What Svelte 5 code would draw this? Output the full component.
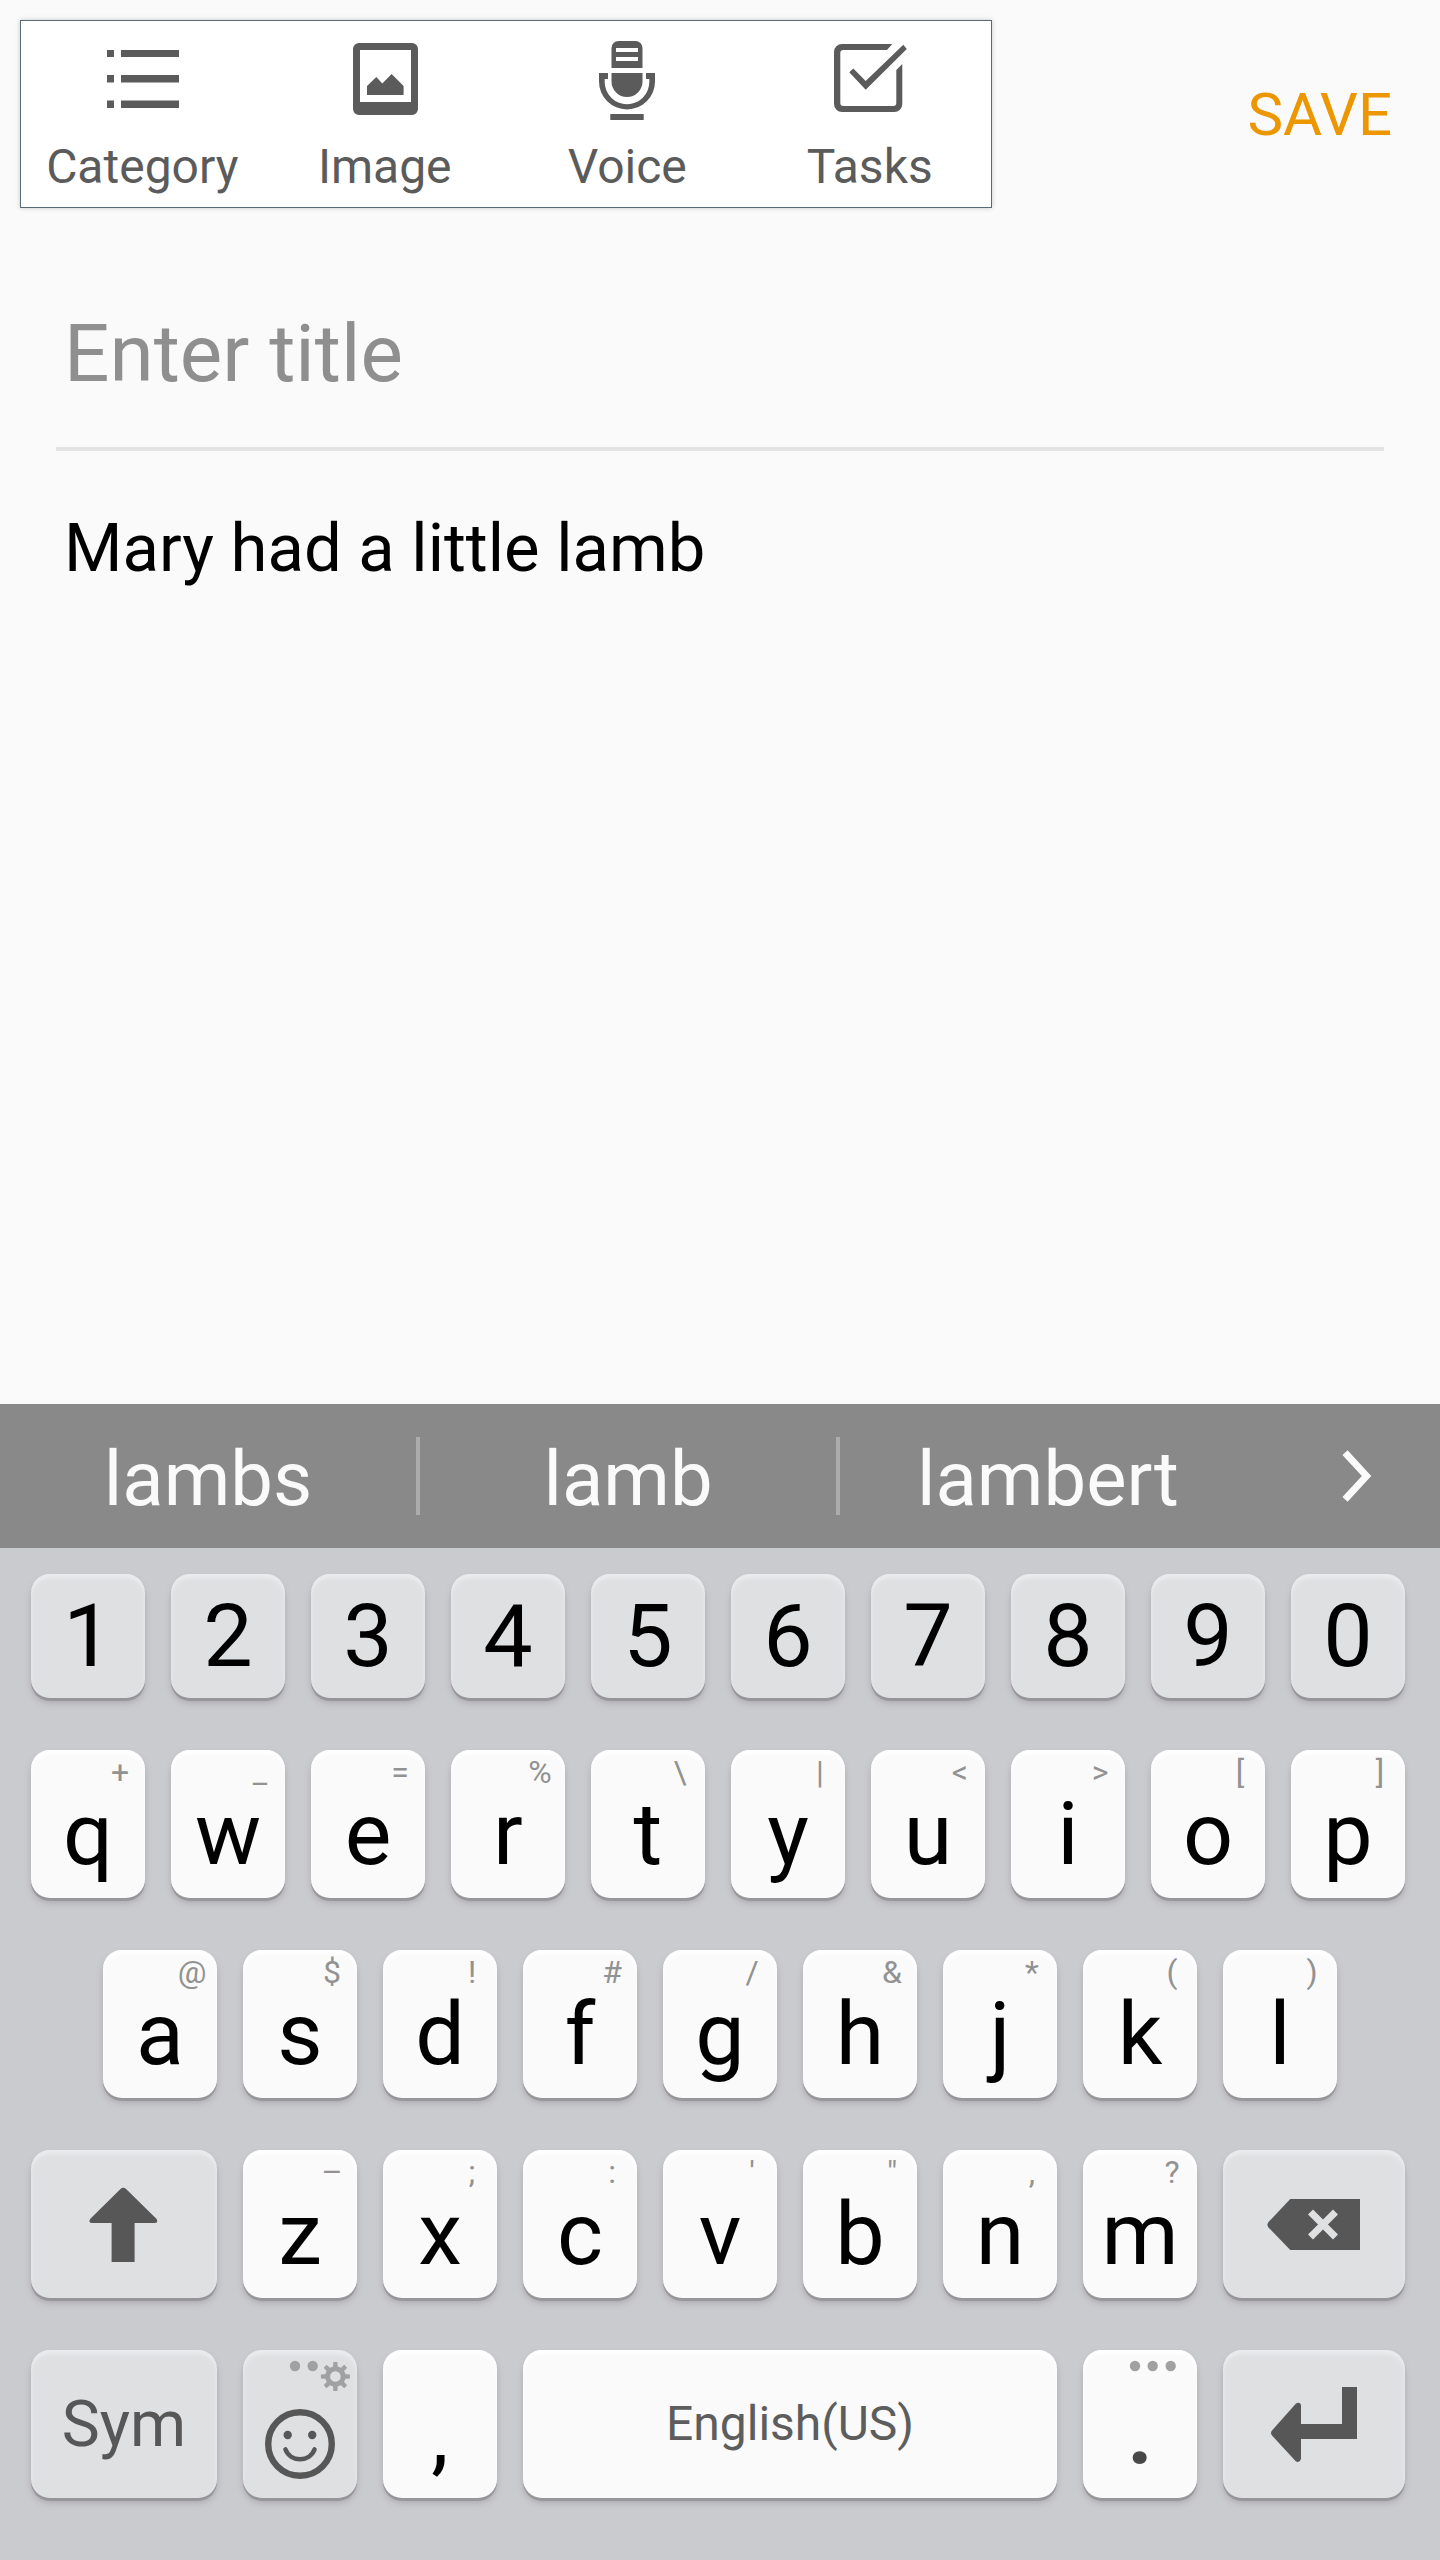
<script>
  const digits = ['1', '2', '3', '4', '5', '6', '7', '8', '9', '0'];
  const rowQ = [['q', '+'], ['w', '_'], ['e', '='], ['r', '%'], ['t', '\\'], ['y', '|'], ['u', '<'], ['i', '>'], ['o', '['], ['p', ']']];
  const rowA = [['a', '@'], ['s', '$'], ['d', '!'], ['f', '#'], ['g', '/'], ['h', '&'], ['j', '*'], ['k', '('], ['l', ')']];
  const rowZ = [['z', '–'], ['x', ';'], ['c', ':'], ['v', "'"], ['b', '"'], ['n', ','], ['m', '?']];
  const suggestions = ['lambs', 'lamb', 'lambert'];

  let title = $state('');
  let note = $state('Mary had a little lamb');

  const type = (ch) => (note += ch);
  const erase = () => (note = note.slice(0, -1));
  const replaceLast = (word) => (note = note.replace(/\S*$/, word));

  // Gear outline built from eight evenly spaced teeth.
  const teeth = [0, 45, 90, 135, 180, 225, 270, 315];
</script>

{#snippet letter(key)}
  <button class="key light" onclick={() => type(key[0])}>
    <span class="hint">{key[1]}</span>
    <span class="glyph">{key[0]}</span>
  </button>
{/snippet}

<div class="screen">
  <header>
    <nav class="tools" aria-label="Insert">
      <button class="tool">
        <svg viewBox="0 0 80 80" aria-hidden="true">
          <path d="M5 10h7v7h-7zM19 10h58v7h-58zM5 35h7v7.500h-7zM19 35h58v7.500h-58zM5 60.500h7v7.500h-7zM19 60.500h58v7.500h-58z" />
        </svg>
        <span>Category</span>
      </button>
      <button class="tool">
        <svg viewBox="0 0 80 80" aria-hidden="true">
          <path fill-rule="evenodd" d="M14 3h53a6 6 0 0 1 6 6v60a6 6 0 0 1-6 6h-53a6 6 0 0 1-6-6v-60a6 6 0 0 1 6-6zM15 10v52h51v-52z" />
          <path d="M22 55v-9l9.300-9 6 6.500 9.300-9.500 12 12v9z" />
        </svg>
        <span>Image</span>
      </button>
      <button class="tool">
        <svg viewBox="0 0 80 80" aria-hidden="true">
          <path fill-rule="evenodd" d="M31.500 1h17a7 7 0 0 1 7 7v20h-31v-20a7 7 0 0 1 7-7zM29 8v4h22v-4zM29 17v4h22v-4z" />
          <path d="M24.500 33h31v8.500a15.500 15.500 0 0 1-31 0z" />
          <path d="M12 33h9v6h-3.300v3a22.300 22.300 0 0 0 44.600 0v-3h-3.300v-6h9v8.500a28 28 0 0 1-56 0z" />
          <path d="M23.300 74h33.400v6h-33.400z" />
        </svg>
        <span>Voice</span>
      </button>
      <button class="tool">
        <svg viewBox="0 0 80 80" aria-hidden="true">
          <path d="M62.300 4h-50.300a8 8 0 0 0-8 8v52a8 8 0 0 0 8 8h52.300a8 8 0 0 0 8-8v-40l-6 6v33a3 3 0 0 1-3 3h-50a3 3 0 0 1-3-3v-50a3 3 0 0 1 3-3h43.700z" />
          <path d="M19.300 32.300l4-3.800 12.400 12.500 37.600-36.300 3.500 4.200-41.100 40.800z" />
        </svg>
        <span>Tasks</span>
      </button>
    </nav>
    <button class="save">SAVE</button>
  </header>

  <main>
    <input class="title" aria-label="Title" placeholder="Enter title" bind:value={title} />
    <textarea class="note" aria-label="Note" spellcheck="false" bind:value={note}></textarea>
  </main>

  <section class="suggestions" aria-label="Suggestions">
    {#each suggestions as word}
      <button class="word" onclick={() => replaceLast(word)}>{word}</button>
    {/each}
    <button class="more" aria-label="More suggestions">
      <svg viewBox="0 0 36 60" aria-hidden="true"><path d="M6 6.700L27.500 30 6 53.300" /></svg>
    </button>
  </section>

  <section class="keyboard" aria-label="Keyboard">
    <div class="row numbers">
      {#each digits as d}
        <button class="key dark" onclick={() => type(d)}><span class="glyph">{d}</span></button>
      {/each}
    </div>
    <div class="row">
      {#each rowQ as key}{@render letter(key)}{/each}
    </div>
    <div class="row inset">
      {#each rowA as key}{@render letter(key)}{/each}
    </div>
    <div class="row">
      <button class="key dark wide" aria-label="Shift">
        <svg class="icon" viewBox="0 0 100 100" aria-hidden="true">
          <path d="M46.500 15q2.800-2.500 5.600 0l30.500 30q2 4-2 4h-20v39h-23v-39h-19.500q-4 0-2-4z" />
        </svg>
      </button>
      {#each rowZ as key}{@render letter(key)}{/each}
      <button class="key dark side" aria-label="Backspace" onclick={erase}>
        <svg class="icon" viewBox="0 0 100 100" aria-hidden="true">
          <path d="M26.300 25h69.700v51h-69.700l-21.800-22.500q-2.200-2.700 0-5.500z" />
          <path class="cross" d="M46.500 38l25 25M71.500 38l-25 25" />
        </svg>
      </button>
    </div>
    <div class="row">
      <button class="key dark wide sym">Sym</button>
      <button class="key dark" aria-label="Emoji and settings">
        <svg class="full" viewBox="0 0 114 148" aria-hidden="true">
          <g class="faint">
            <circle cx="52" cy="16" r="5.200" />
            <circle cx="69.700" cy="16" r="5.200" />
            <circle class="ring" cx="92.400" cy="26.500" r="7.800" />
            {#each teeth as angle}
              <path d="M89.900 19l.5-7h4l.5 7z" transform="rotate({angle} 92.400 26.500)" />
            {/each}
          </g>
          <circle class="line" cx="57" cy="94" r="31.800" />
          <circle cx="44.700" cy="85" r="4.200" />
          <circle cx="69.200" cy="85" r="4.200" />
          <path class="smile" d="M42.500 99.500c5 13 24 13 29 0" />
        </svg>
      </button>
      <button class="key light" onclick={() => type(',')}><span class="glyph">,</span></button>
      <button class="key light space" onclick={() => type(' ')}>English(US)</button>
      <button class="key light" onclick={() => type('.')}>
        <svg class="full" viewBox="0 0 114 148" aria-hidden="true">
          <g class="faint">
            <circle cx="52" cy="16" r="5.200" />
            <circle cx="69.700" cy="16" r="5.200" />
            <circle cx="87.700" cy="16" r="5.200" />
          </g>
        </svg>
        <span class="glyph soft">.</span>
      </button>
      <button class="key dark side" aria-label="Enter" onclick={() => type('\n')}>
        <svg class="icon" viewBox="0 0 100 100" aria-hidden="true">
          <path d="M78 13h15v52h-56v20q-1 4-5 2.500l-24-26q-2-2.500 0-5l24-27q4-2 5 1.500v19h41z" />
        </svg>
      </button>
    </div>
  </section>
</div>

<style>
  :global(body) {
    background: #fafafa;
  }

  .screen {
    box-sizing: border-box;
    display: flex;
    flex-direction: column;
    min-height: 100vh;
    font-family: Roboto, 'Liberation Sans', sans-serif;
    color: #000;
  }

  button,
  input,
  textarea {
    margin: 0;
    padding: 0;
    border: 0;
    background: none;
    font: inherit;
    color: inherit;
    outline: none;
  }

  header {
    display: flex;
    justify-content: space-between;
    align-items: center;
    padding: 20px 48px 0 20px;
  }

  .tools {
    box-sizing: border-box;
    display: flex;
    flex: 0 1 972px;
    padding: 19px 0 10px;
    border: 1px solid #5a6a75;
    background: #fff;
    box-shadow: 0 0 5px rgba(0, 0, 0, 0.2);
  }

  .tool {
    flex: 1;
    display: flex;
    flex-direction: column;
    align-items: center;
    gap: 17px;
    font-size: 48px;
    line-height: 60px;
    color: #5b5b5b;
  }

  .tool svg {
    width: 80px;
    height: 80px;
    fill: currentColor;
  }

  .save {
    padding-top: 2px;
    font-size: 60px;
    line-height: 72px;
    color: #ec9600;
  }

  main {
    flex: 1;
    display: flex;
    flex-direction: column;
    padding: 80px 56px 0;
  }

  .title {
    height: 127px;
    padding: 2px 8px 30px;
    border-bottom: 4px solid #e3e3e3;
    font-size: 80px;
    line-height: 96px;
  }

  .title::placeholder {
    color: #8f8f8f;
    opacity: 1;
  }

  .note {
    flex: 1;
    padding: 57px 8px 0;
    font-size: 67px;
    line-height: 80px;
    resize: none;
  }

  .suggestions {
    display: flex;
    align-items: center;
    height: 144px;
    background: #89898a;
    color: #fafafa;
  }

  .word {
    flex: 0 1 calc(100% * 7 / 24);
    height: 78px;
    padding-top: 6px;
    border-right: 4px solid #acacac;
    font-size: 76px;
    line-height: 72px;
  }

  .word:nth-child(3) {
    border-right-color: transparent;
  }

  .more {
    flex: 1;
    height: 144px;
    padding-left: 14px;
    display: flex;
    align-items: center;
    justify-content: center;
  }

  .more svg {
    width: 36px;
    height: 60px;
    fill: none;
    stroke: #fafafa;
    stroke-width: 7;
  }

  .keyboard {
    display: flex;
    flex-direction: column;
    gap: 52px;
    padding: 26px 35px 62px 31px;
    background: #cacbcf;
  }

  .row {
    display: flex;
    gap: 26px;
    height: 148px;
  }

  .row.numbers {
    height: 124px;
  }

  .row.inset {
    padding: 0 68px 0 72px;
  }

  .key {
    position: relative;
    flex: 114 1 0;
    min-width: 0;
    display: flex;
    justify-content: center;
    align-items: center;
    border-radius: 19px;
    color: #000;
  }

  .light {
    background: #fafafa;
    box-shadow: inset 0 4px 4px #fff, 0 3px 0 #97979b, 0 5px 6px rgba(120, 110, 120, 0.35);
  }

  .dark {
    background: #dfe0e2;
    box-shadow: inset 0 4px 4px #ebecee, 0 3px 0 #97979b, 0 5px 6px rgba(120, 110, 120, 0.35);
    color: #575757;
  }

  .wide {
    flex-grow: 186;
  }

  .side {
    flex-grow: 182;
  }

  .space {
    flex-grow: 534;
    padding-bottom: 2px;
    font-size: 48px;
    color: #5d5d5d;
  }

  .sym {
    font-size: 64px;
  }

  .glyph {
    font-size: 88px;
    line-height: 104px;
    color: #000;
  }

  .light .glyph {
    padding-top: 20px;
  }

  .glyph.soft {
    font-weight: 700;
    color: #484848;
  }

  .hint {
    position: absolute;
    top: 3px;
    right: 0;
    width: 50px;
    font-size: 32px;
    line-height: 38px;
    text-align: center;
    color: #929292;
  }

  .icon {
    width: 100px;
    height: 100px;
    fill: #575757;
  }

  .cross {
    fill: none;
    stroke: #dfe0e2;
    stroke-width: 7;
  }

  .full {
    position: absolute;
    inset: 0;
    width: 100%;
    height: 100%;
    fill: #575757;
  }

  .faint {
    fill: #a1a1a1;
  }

  .ring {
    fill: none;
    stroke: #a1a1a1;
    stroke-width: 5;
  }

  .line {
    fill: none;
    stroke: #575757;
    stroke-width: 6.4;
  }

  .smile {
    fill: none;
    stroke: #575757;
    stroke-width: 4.6;
    stroke-linecap: round;
  }
</style>
